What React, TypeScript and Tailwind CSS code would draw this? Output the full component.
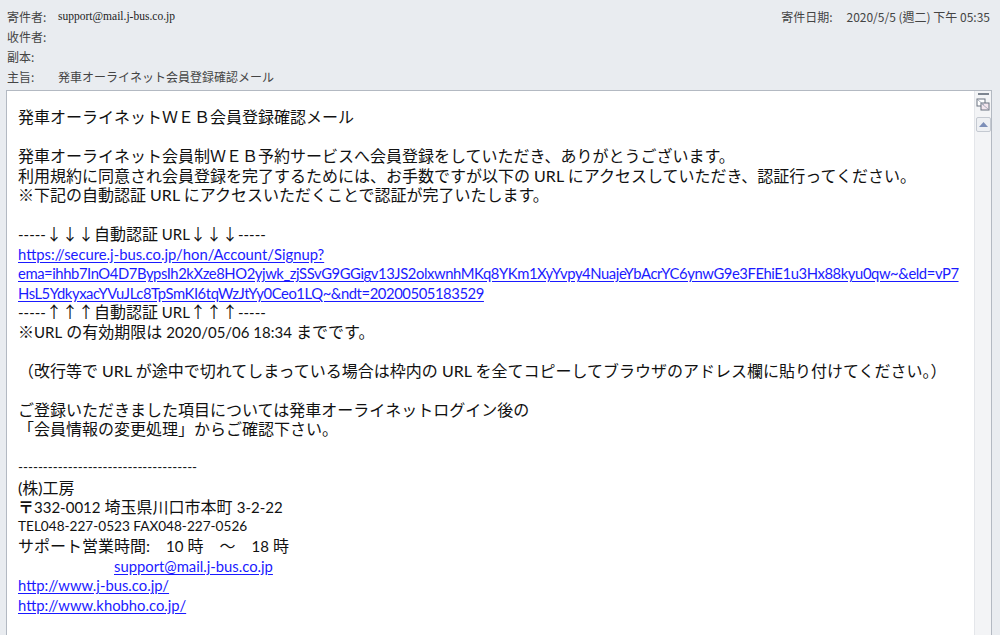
const jp = "font-['Lato','Noto_Sans_CJK_JP',sans-serif]";
const cjk = "font-['Noto_Sans_CJK_JP',sans-serif] text-[16px] text-[#111]";

function Link({ children, tight }: { children: React.ReactNode; tight?: boolean }) {
  return (
    <span
      className={`text-[14.8px] text-[#1a1aff] underline decoration-[#1a1aff] underline-offset-2 ${tight ? "tracking-[-0.42px]" : ""}`}
    >
      {children}
    </span>
  );
}

// full-width arrows from the CJK face
function Arrows({ ch }: { ch: string }) {
  return <span className={cjk}>{ch}{ch}{ch}</span>;
}

function HeaderRow({ label, children }: { label: string; children?: React.ReactNode }) {
  return (
    <div className="flex h-5 items-center">
      <span className="w-[51px] text-[#444]">{label}</span>
      {children}
    </div>
  );
}

function Scrollbar() {
  return (
    <div className="flex w-[17px] shrink-0 flex-col items-center border-l border-[#e4e6ea] bg-[#f3f4f6]">
      <div className="mt-[2px] h-[2px] w-[11px] bg-[#7d8590]" />
      <svg width="14" height="14" viewBox="0 0 14 14" className="mt-[3px]">
        <rect x="1" y="1" width="8" height="7" fill="#fff" stroke="#6b7280" strokeWidth="1" />
        <rect x="5" y="5" width="8" height="7" fill="#f3e6ee" stroke="#6b7280" strokeWidth="1" />
        <path d="M2 2 L8 7 M6 6 L12 11" stroke="#9aa3b2" strokeWidth="0.8" />
      </svg>
      <div className="mt-[5px] flex h-[15px] w-[15px] items-center justify-center rounded-[2px] border border-[#c4c9d1] bg-[#eef0f3]">
        <svg width="9" height="5" viewBox="0 0 9 5">
          <path d="M0 5 L4.5 0 L9 5 Z" fill="#7d8fb8" />
        </svg>
      </div>
    </div>
  );
}

export default function App() {
  return (
    <div className="flex h-[635px] w-[1000px] flex-col overflow-hidden bg-[#e9ecf0]">
      <div className="relative px-[7px] pt-[7px] text-[12px] font-['Noto_Sans_CJK_TC',sans-serif] text-[#333]">
        <HeaderRow label="寄件者:">
          <span className="font-['Liberation_Serif',serif] text-[11.5px] text-[#222]">support@mail.j-bus.co.jp</span>
        </HeaderRow>
        <HeaderRow label="收件者:" />
        <HeaderRow label="副本:" />
        <HeaderRow label="主旨:">
          <span className="text-[#444]">発車オーライネット会員登録確認メール</span>
        </HeaderRow>
        <div className="absolute right-[10px] top-[7px] flex h-5 items-center text-[#444]">
          <span className="mr-[14px]">寄件日期:</span>
          <span>2020/5/5 (週二) 下午 05:35</span>
        </div>
      </div>

      <div className="ml-[6px] mr-[8px] mt-[3px] flex min-h-0 flex-1 border border-b-0 border-[#b3b9c2] bg-white">
        <div
          className={`min-w-0 flex-1 overflow-hidden pl-[11px] pt-[16px] text-[16px] leading-[19.5px] text-[#111] ${jp} [&>div]:h-[19.5px] [&>div]:whitespace-nowrap`}
        >
          <div>発車オーライネットＷＥＢ会員登録確認メール</div>
          <div />
          <div>発車オーライネット会員制ＷＥＢ予約サービスへ会員登録をしていただき、ありがとうございます。</div>
          <div>利用規約に同意され会員登録を完了するためには、お手数ですが以下の URL にアクセスしていただき、認証行ってください。</div>
          <div>※下記の自動認証 URL にアクセスいただくことで認証が完了いたします。</div>
          <div />
          <div className="text-[15px]">-----<Arrows ch="↓" /><span className="text-[16px]">自動認証</span> URL<Arrows ch="↓" />-----</div>
          <div><Link>https://secure.j-bus.co.jp/hon/Account/Signup?</Link></div>
          <div><Link tight>ema=ihhb7InO4D7BypsIh2kXze8HO2yjwk_zjSSvG9GGigv13JS2olxwnhMKq8YKm1XyYvpy4NuajeYbAcrYC6ynwG9e3FEhiE1u3Hx88kyu0qw~&amp;eld=vP7</Link></div>
          <div><Link tight>HsL5YdkyxacYVuJLc8TpSmKI6tqWzJtYy0Ceo1LQ~&amp;ndt=20200505183529</Link></div>
          <div className="text-[15px]">-----<Arrows ch="↑" /><span className="text-[16px]">自動認証</span> URL<Arrows ch="↑" />-----</div>
          <div>※<span className="text-[15px]">URL</span> の有効期限は <span className="text-[15px]">2020/05/06 18:34</span> までです。</div>
          <div />
          <div>（改行等で URL が途中で切れてしまっている場合は枠内の URL を全てコピーしてブラウザのアドレス欄に貼り付けてください。）</div>
          <div />
          <div>ご登録いただきました項目については発車オーライネットログイン後の</div>
          <div>「会員情報の変更処理」からご確認下さい。</div>
          <div />
          <div className="text-[13.4px]">------------------------------------</div>
          <div>(株)工房</div>
          <div><span className="font-bold">〒</span><span className="text-[15px]">332-0012</span> 埼玉県川口市本町 <span className="text-[15px]">3-2-22</span></div>
          <div className="text-[13.6px]">TEL048-227-0523 FAX048-227-0526</div>
          <div className="whitespace-pre">サポート営業時間:　<span className="text-[15px]">10</span> 時　～　<span className="text-[15px]">18</span> 時</div>
          <div className="pl-[96px]"><Link>support@mail.j-bus.co.jp</Link></div>
          <div><Link>http://www.j-bus.co.jp/</Link></div>
          <div><Link>http://www.khobho.co.jp/</Link></div>
        </div>
        <Scrollbar />
      </div>
    </div>
  );
}
